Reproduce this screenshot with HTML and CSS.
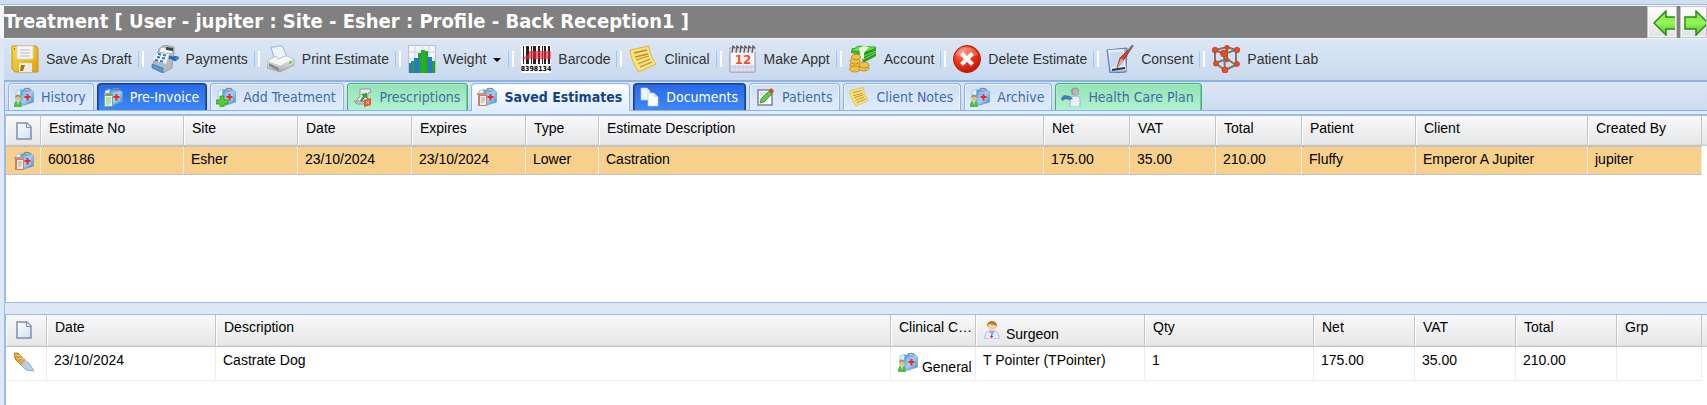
FILE: index.html
```html
<!DOCTYPE html>
<html lang="en">
<head>
  <meta charset="UTF-8">
  <meta name="viewport" content="width=device-width, initial-scale=1.0">
  <title>Treatment</title>
  <link rel="stylesheet" href="styles.css">
</head>
<body>
  <svg class="sprite" aria-hidden="true">
    <defs>
      <linearGradient id="gKit" x1="0" y1="0" x2="1" y2="1"><stop offset="0" stop-color="#4b93d8"/><stop offset=".5" stop-color="#9cccf6"/><stop offset="1" stop-color="#3a7fc6"/></linearGradient>
      <linearGradient id="gGold" x1="0" y1="0" x2="1" y2="1"><stop offset="0" stop-color="#ffdc3c"/><stop offset="1" stop-color="#dba20c"/></linearGradient>
      <linearGradient id="gGrey" x1="0" y1="0" x2="0" y2="1"><stop offset="0" stop-color="#fdfdfd"/><stop offset="1" stop-color="#a9a9a9"/></linearGradient>
      <linearGradient id="gPage" x1="0" y1="0" x2="1" y2="1"><stop offset="0" stop-color="#fff"/><stop offset="1" stop-color="#cfe0f0"/></linearGradient>
      <linearGradient id="gArrow" x1="0" y1="0" x2="0" y2="1"><stop offset="0" stop-color="#7ee23c"/><stop offset=".5" stop-color="#93f55a"/><stop offset="1" stop-color="#4cc81e"/></linearGradient>
      <radialGradient id="gRed" cx=".35" cy=".25" r=".8"><stop offset="0" stop-color="#ff8d70"/><stop offset=".5" stop-color="#f03519"/><stop offset="1" stop-color="#c01505"/></radialGradient>
    </defs>
    <symbol id="kit" viewBox="0 0 20 20">
      <path d="M2 4 7 2v15l-5-2z" fill="#e6f0f8" stroke="#8fb5d6" stroke-width=".7"/>
      <path d="M10 3c0-2 6-2 6 0" fill="none" stroke="#8b8b8b" stroke-width="1.5"/>
      <path d="M7 3 18 3.500 19.500 5v10L9 18.500 6 15z" fill="url(#gKit)" stroke="#5b9ad4" stroke-width=".6"/>
      <path d="M9 5 17 5v9l-8 2z" fill="#a3d0f8" opacity=".5"/>
      <path d="M12.500 7h2v2h2v2h-2v2.500h-2V11h-2V9h2z" fill="#f0281a"/>
    </symbol>
    <symbol id="kit-user" viewBox="0 0 20 20">
      <use href="#kit"/>
      <path d="M0 20c0-5 1-6 4-6s4 1 4 6z" fill="#4fbd4a"/><path d="m3 14 1 4 1-4z" fill="#d9f6d0"/>
      <circle cx="4" cy="11" r="2.800" fill="#e9b98a"/><path d="M1 10.500c0-4 6-4 6 0l-3-1z" fill="#7ba763"/>
    </symbol>
    <symbol id="kit-clip" viewBox="0 0 20 20">
      <use href="#kit"/>
      <path d="M1 7h9v13H1z" fill="#6fb074"/><path d="M2 9h7v10H2z" fill="#e4f3e0"/><path d="M3 6h5v3H3z" fill="#8c958c"/>
      <path d="M3 11h5M3 13h5M3 15h5M3 17h4" stroke="#8fc391"/>
    </symbol>
    <symbol id="kit-plus" viewBox="0 0 20 20">
      <use href="#kit"/>
      <path d="M4 9h4v4h4v4H8v3H4v-3H0v-4h4z" fill="#5bcb38" stroke="#2f9a1d" stroke-width=".8"/>
    </symbol>
    <symbol id="kit-bill" viewBox="0 0 20 20">
      <use href="#kit"/>
      <path d="M1 7h9v12H1z" fill="#c9806b"/><path d="M3 9h6v9H3z" fill="#f5ede8"/><path d="M0 6h10v2H0z" fill="#d88e78"/>
      <path d="M4 11h4M4 13h4M4 15h3" stroke="#c79a8c"/>
    </symbol>
    <symbol id="page" viewBox="0 0 16 18">
      <path d="M1 1h10l4 4v12H1z" fill="url(#gPage)" stroke="#7f8fb0" stroke-width="1.500"/>
      <path d="M10.500 1v4.500H15" fill="#dfe8f3" stroke="#7f8fb0"/>
    </symbol>
    <symbol id="note" viewBox="0 0 28 28">
      <path d="M1 5 20 1c1 8 3 13 7 18L10 27C5 21 2 13 1 5z" fill="#f9e27d" stroke="#dcb646"/>
      <path d="m5 8 13-3M6 12l13-3M7 15l13-4M9 19l12-5M11 22l12-5" stroke="#b78f2e" stroke-width="1.300"/>
    </symbol>
    <symbol id="disk" viewBox="0 0 28 28">
      <path d="M1 1h24l2 2v24H4l-3-3z" fill="url(#gGold)" stroke="#c79412"/>
      <path d="M6 1h16v13H6z" fill="#f6f6f6" stroke="#d5d5d5"/><path d="M9 5h10M9 8h10M9 11h10" stroke="#bbb"/>
      <path d="M8 18h13v9H8z" fill="#e9e9e9"/><path d="M10 20h4l-2 6h-3z" fill="#a1760c"/><path d="M3 3h1v2H3z" fill="#a1760c"/>
    </symbol>
    <symbol id="till" viewBox="0 0 28 28">
      <path d="m8 4 5-4 10 2v6l-2 15-9 5L1 22l3-8z" fill="#b4bac1" stroke="#8a9097" stroke-width=".7"/>
      <path d="m10 3 11 1v4L9 7z" fill="#fafafa"/><path d="m15 2 7 1v3l-7-1z" fill="#444"/>
      <path d="m6 8 12 1-3 10L2 15z" fill="#f4f6f8"/>
      <path d="m7 9 3 .5M12 10l3 .5M6 12l3 .5M11 13l3 .5M4 15l3 .5M9 16l3 .5" stroke="#2e7cc4" stroke-width="2"/>
      <path d="m1 19 11 4v5L1 23z" fill="#4f9bdd" stroke="#2d6fae" stroke-width=".6"/>
      <path d="m18 12 6 2M24 11v5" stroke="#2569b0" stroke-width="3"/><circle cx="26" cy="13" r="2" fill="#3a86cc"/>
    </symbol>
    <symbol id="printer" viewBox="0 0 28 28">
      <path d="M4 2c5 1 8-3 12 0l4 10-12 4z" fill="#eef5ff" stroke="#8fb0dd"/>
      <path d="m0 16 9-5 2 3 8-3 8 3v6l-14 7L0 23z" fill="url(#gGrey)" stroke="#999" stroke-width=".7"/>
      <path d="m0 16 13 5 14-7-8-3-8 3-2-3z" fill="#f5f5f5" stroke="#bbb" stroke-width=".5"/>
      <path d="m2 21 10 5v-3L2 18z" fill="#888"/><path d="m22 17 3-1v2l-3 1z" fill="#5fcb47"/>
    </symbol>
    <symbol id="chart" viewBox="0 0 28 28">
      <path d="M.5.5h27v27H.5z" fill="#f2f6fc" stroke="#b6bfcd"/><path d="M0 7h28M0 14h28M0 21h28M7 0v28M14 0v28M21 0v28" stroke="#c8d2e2"/>
      <path d="M3 16h4v12H3zM10 8h4v20h-4zM17 6h3v22h-3zM24 16h3v12h-3z" fill="#28a228"/>
      <path d="M1 18h3v10H1zM6 13h5v15H6zM13 9h3v19h-3zM20 12h4v16h-4z" fill="#2878cf"/>
      <path d="M13 5h4v23h-4z" fill="#27ae2a"/>
    </symbol>
    <symbol id="money" viewBox="0 0 28 28">
      <path d="m3 3 14 1v7L2 8z" fill="#3fb32e"/><path d="m2 6 7-5 18 1-4 6z" fill="#6adb4c" stroke="#2f9225" stroke-width=".7"/>
      <path d="m12 8 15-5v8l-13 7z" fill="#299b20"/><path d="m13 12 14-6M13 15l14-7" stroke="#74dc5c"/><path d="m10 3 5-2 5 1-5 6v6l-3-1z" fill="#e7f5dc"/>
      <g fill="#f0c14a" stroke="#b98310" stroke-width=".8"><ellipse cx="6" cy="20" rx="5" ry="3"/><ellipse cx="6" cy="16" rx="5" ry="3"/><ellipse cx="7" cy="12" rx="4.500" ry="2.600"/><ellipse cx="6" cy="24" rx="5.500" ry="3"/><ellipse cx="15" cy="23" rx="5" ry="3"/><ellipse cx="15" cy="20" rx="5" ry="3"/></g>
    </symbol>
    <symbol id="delete" viewBox="0 0 28 28">
      <circle cx="14" cy="14" r="13.500" fill="url(#gRed)" stroke="#b51c0a"/><path d="M3 10c3-10 19-10 22 0-8 3-14 4-22 0z" fill="#fff" opacity=".2"/>
      <path d="m8.500 8.500 11 11m0-11-11 11" stroke="#fff" stroke-width="4"/>
    </symbol>
    <symbol id="consent" viewBox="0 0 28 28">
      <path d="m1 5 20-2-1 24-16 1z" fill="#9db4d6" stroke="#5f7aa8"/><path d="m2 5 16-1 2 21-15 1z" fill="#e2ecfa"/><path d="m4 8 13-1 1 13-13 2z" fill="#c6d9f3"/>
      <path d="m6 25 13-2" stroke="#27334b" stroke-width="2"/>
      <path d="M27 1 19 13l-8 10 3-10L25 2z" fill="#d8402c" stroke="#8e2013" stroke-width=".8"/><path d="m15 13 3 3-7 7z" fill="#e5a08c"/><path d="M27 0 22 6" stroke="#777" stroke-width="2"/>
    </symbol>
    <symbol id="molecule" viewBox="0 0 28 28">
      <path d="M3 5v13l10 7 11-5V5l-9-3zM3 5l9 4 12-4M12 9l1 16M15 2v12L3 18m12-4 9 6" fill="none" stroke="#777" stroke-width="2"/>
      <g fill="#ee4b22" stroke="#b92c0b" stroke-width=".6"><circle cx="3" cy="5" r="2.800"/><circle cx="15" cy="2.500" r="2.200"/><circle cx="25" cy="5" r="2.800"/><circle cx="12" cy="8.500" r="3.500"/><circle cx="4" cy="18.500" r="2.600"/><circle cx="15" cy="15" r="2"/><circle cx="25" cy="19" r="2.500"/><circle cx="13" cy="25" r="3"/></g>
    </symbol>
    <symbol id="script" viewBox="0 0 20 20">
      <path d="M7 2h10l1 3-3 1-1 9H3l2-4 2-1z" fill="#e9e9ec" stroke="#85858c" stroke-width=".8"/><path d="M1 14h10l2 3H4z" fill="#c8c8ce" stroke="#77777d" stroke-width=".7"/>
      <path d="m8 7 6-1v6l-2-2-3 5-2-1 3-5z" fill="#29a32e"/><path d="m11 13 7-2v7l-7 2z" fill="#e8552f"/><path d="m13 14 3 3m0-3-3 3" stroke="#ffd0b8"/>
    </symbol>
    <symbol id="documents" viewBox="0 0 20 20">
      <path d="M2 1h6l3 3v9H2z" fill="#eef4fb" stroke="#b9c9de" stroke-width=".7"/><path d="M9 6h6l4 4v9H9z" fill="#fff" stroke="#b9c9de" stroke-width=".7"/><path d="M15 6v4h4M8 1v3h3" fill="#ccd9ea"/>
    </symbol>
    <symbol id="edit" viewBox="0 0 20 20">
      <path d="M3 3h14v15H3z" fill="#fff" stroke="#76849b" stroke-width="1.500"/><path d="M5 6h7M5 8h5" stroke="#b6bfcd"/>
      <path d="m14 4 3 3-8 8-4 1 1-4z" fill="#65cc41" stroke="#2c8c23" stroke-width=".8"/><path d="m14 4 2-3 3 3-2 3z" fill="#e0462c"/>
    </symbol>
    <symbol id="health" viewBox="0 0 20 20">
      <circle cx="14" cy="4.500" r="4" fill="#909ba8"/><path d="M12 4c0-3 5-3 5 1s-5 4-5-1z" fill="#c9b3a6"/><path d="M9 20V12c1-4 10-4 10 0v8z" fill="#e8eef8" stroke="#94a3ba" stroke-width=".8"/>
      <path d="m0 11 3-3 6 1 3 3-4 1-3-1-4 2z" fill="#3f7fb4"/>
    </symbol>
    <symbol id="scalpel" viewBox="0 0 20 20">
      <path d="m0 1 4 0 7 7-4 5-6-6z" fill="#d99a2f" stroke="#a97015" stroke-width=".7"/><path d="m1 3 6 1M3 7l6-1M6 11l4-5" stroke="#f3cd7b"/>
      <path d="m10 8 5 3 5 8-8-1-5-5z" fill="#b5d2f3" stroke="#7c9cc4" stroke-width=".8"/><path d="m8 11 3-1 1 3-2 1z" fill="#f3c164"/>
    </symbol>
    <symbol id="surgeon" viewBox="0 0 16 18">
      <path d="M1 18c0-7 2-8 7-8s7 1 7 8z" fill="#e6ecff" stroke="#9bace2" stroke-width=".8"/><path d="m5 10 3 5 3-5z" fill="#8daaf0"/>
      <circle cx="8" cy="5.500" r="4" fill="#f6cf9e"/><path d="M3 6c-1-8 11-8 10 0l-2-2-6-1z" fill="#b87a22"/><path d="M7 14h1v1h1v1H8v1H7v-1H6v-1h1z" fill="#ee3423"/>
    </symbol>
    <symbol id="arrow-left" viewBox="0 0 24 26">
      <path d="M1 13 13 1v6h12v12H13v6z" fill="url(#gArrow)" stroke="#2c8a18" stroke-width="1.500"/>
    </symbol>
    <symbol id="arrow-right" viewBox="0 0 24 26">
      <path d="M24 13 12 1v6H1v12h11v6z" fill="url(#gArrow)" stroke="#2c8a18" stroke-width="1.500"/>
    </symbol>
  </svg>

  <main class="window">
    <header class="titlebar">
      <h1>Treatment [ User - jupiter : Site - Esher : Profile - Back Reception1 ]</h1>
      <nav class="pager">
        <button type="button" aria-label="Previous"><svg><use href="#arrow-left"/></svg></button>
        <button type="button" aria-label="Next"><svg><use href="#arrow-right"/></svg></button>
      </nav>
    </header>

    <div class="toolbar">
      <button type="button"><svg><use href="#disk"/></svg>Save As Draft</button>
      <button type="button"><svg><use href="#till"/></svg>Payments</button>
      <button type="button"><svg><use href="#printer"/></svg>Print Estimate</button>
      <button type="button" class="has-menu"><svg><use href="#chart"/></svg>Weight</button>
      <button type="button">
        <svg class="wide" viewBox="0 0 30 28">
          <path d="M0 0h30v28H0z" fill="#fff"/>
          <path d="M2 1h1v18H2zM5 1h3v18H5zM10 1h1v18h-1zM12 1h3v18h-3zM17 1h2v18h-2zM21 1h1v18h-1zM23 1h2v18h-2zM27 1h2v18h-2z" fill="#2b2021"/>
          <path d="M8 6h22v8H0l8-5z" fill="#f0263a" opacity=".65"/>
          <text x="15" y="26" text-anchor="middle" class="barcode-digits">8398134</text>
        </svg>Barcode</button>
      <button type="button"><svg><use href="#note"/></svg>Clinical</button>
      <button type="button">
        <svg viewBox="0 0 28 28">
          <path d="M1 3h25v24H1z" fill="#f7f7fc" stroke="#8c8caa"/><path d="M2 20h23v6H2z" fill="#dedff0"/>
          <path d="M2 22h23M6 20v6M10 20v6M14 20v6M18 20v6M22 20v6" stroke="#bfc0db" stroke-width=".6"/>
          <path d="M1 4h26v3H1z" fill="#d8d8e0"/>
          <path d="m3 8 1-7 2 2M7 8l1-7 2 2M11 8l1-7 2 2M15 8l1-7 2 2M19 8l1-7 2 2M23 8l1-7 2 2" fill="none" stroke="#555" stroke-width="1.200"/>
          <text x="14" y="19" text-anchor="middle" class="calendar-day">12</text>
        </svg>Make Appt</button>
      <button type="button"><svg><use href="#money"/></svg>Account</button>
      <button type="button"><svg><use href="#delete"/></svg>Delete Estimate</button>
      <button type="button"><svg><use href="#consent"/></svg>Consent</button>
      <button type="button"><svg><use href="#molecule"/></svg>Patient Lab</button>
    </div>

    <div class="tabs">
      <button type="button"><svg><use href="#kit-user"/></svg>History</button>
      <button type="button" class="blue"><svg><use href="#kit-clip"/></svg>Pre-Invoice</button>
      <button type="button"><svg><use href="#kit-plus"/></svg>Add Treatment</button>
      <button type="button" class="green"><svg><use href="#script"/></svg>Prescriptions</button>
      <button type="button" class="active"><svg><use href="#kit-bill"/></svg>Saved Estimates</button>
      <button type="button" class="blue"><svg><use href="#documents"/></svg>Documents</button>
      <button type="button"><svg><use href="#edit"/></svg>Patients</button>
      <button type="button"><svg><use href="#note"/></svg>Client Notes</button>
      <button type="button"><svg><use href="#kit-user"/></svg>Archive</button>
      <button type="button" class="green"><svg><use href="#health"/></svg>Health Care Plan</button>
    </div>

    <section class="grid estimates">
      <table>
        <colgroup>
          <col class="w-icon"><col class="w-no"><col class="w-med"><col class="w-med"><col class="w-med"><col class="w-type"><col>
          <col class="w-sum"><col class="w-sum"><col class="w-sum"><col class="w-med"><col class="w-wide"><col class="w-med">
        </colgroup>
        <thead>
          <tr>
            <th><svg class="page"><use href="#page"/></svg></th>
            <th>Estimate No</th><th>Site</th><th>Date</th><th>Expires</th><th>Type</th><th>Estimate Description</th>
            <th>Net</th><th>VAT</th><th>Total</th><th>Patient</th><th>Client</th><th>Created By</th>
          </tr>
        </thead>
        <tbody>
          <tr class="selected">
            <td><svg><use href="#kit-bill"/></svg></td>
            <td>600186</td><td>Esher</td><td>23/10/2024</td><td>23/10/2024</td><td>Lower</td><td>Castration</td>
            <td>175.00</td><td>35.00</td><td>210.00</td><td>Fluffy</td><td>Emperor A Jupiter</td><td>jupiter</td>
          </tr>
        </tbody>
      </table>
    </section>

    <div class="splitter"></div>

    <section class="grid items">
      <table>
        <colgroup>
          <col class="w-icon"><col class="w-wide"><col><col class="w-sum"><col class="w-wide"><col class="w-wide">
          <col class="w-price"><col class="w-price"><col class="w-price"><col class="w-sum">
        </colgroup>
        <thead>
          <tr>
            <th><svg class="page"><use href="#page"/></svg></th>
            <th>Date</th><th>Description</th><th>Clinical C…</th>
            <th><svg class="page"><use href="#surgeon"/></svg> Surgeon</th>
            <th>Qty</th><th>Net</th><th>VAT</th><th>Total</th><th>Grp</th>
          </tr>
        </thead>
        <tbody>
          <tr>
            <td><svg><use href="#scalpel"/></svg></td>
            <td>23/10/2024</td><td>Castrate Dog</td>
            <td><svg><use href="#kit-user"/></svg> General</td>
            <td>T Pointer (TPointer)</td><td>1</td><td>175.00</td><td>35.00</td><td>210.00</td><td></td>
          </tr>
        </tbody>
      </table>
    </section>
  </main>
</body>
</html>
```
FILE: styles.css
```css
* {
  box-sizing: border-box;
}
body {
  margin: 0;
  background: #dfe8f6;
  font-family: "Liberation Sans", Arial, sans-serif;
  font-size: 14px;
  line-height: 16px;
  color: #000;
}
button {
  margin: 0;
  padding: 0;
  border: none;
  background: none;
  font: inherit;
  cursor: pointer;
}
.sprite {
  position: absolute;
  width: 0;
  height: 0;
}
.barcode-digits {
  font: bold 7px "DejaVu Sans Condensed", sans-serif;
}
.calendar-day {
  font: bold 12px "DejaVu Sans", sans-serif;
  fill: #f4511e;
}
.window {
  display: flex;
  flex-direction: column;
  min-height: 100vh;
  padding-left: 4px;
  overflow: hidden;
  border-top: 4px solid #d0deef;
}

/* title */
.titlebar {
  display: flex;
  justify-content: space-between;
  height: 34px;
  margin-left: -4px;
  padding-left: 4px;
  border-top: 1px solid #99bce8;
  background: linear-gradient(#808080, #808080) 4px 1px no-repeat, #f4f8fd;
}
.titlebar h1 {
  margin: 0;
  font: bold 20px/32px "DejaVu Sans Condensed", Tahoma, sans-serif;
  color: #fff;
}
.pager {
  display: flex;
  gap: 3px;
  padding-top: 1px;
}
.pager button {
  width: 30px;
  padding: 1px 0 0 4px;
  border: 2px solid #f8f8f8;
  background: linear-gradient(#fff, #e3e3e3);
  outline: 1px solid #c4c4c4;
  outline-offset: -1px;
  overflow: hidden;
}
.pager button:last-child {
  width: 27px;
  padding-left: 2px;
  border-right: none;
}
.pager svg {
  display: block;
  width: 24px;
  height: 26px;
}

/* toolbar */
.toolbar {
  display: flex;
  align-items: center;
  height: 44px;
  padding: 0 0 2px 7px;
  border-top: 1px solid #f4f8fd;
  border-bottom: 2px solid #8db2e3;
  background: linear-gradient(#dce7f5, #c9d9ee);
}
.toolbar button {
  display: flex;
  align-items: center;
  gap: 7px;
  color: #333;
}
.toolbar svg {
  width: 28px;
  height: 28px;
}
.toolbar .wide {
  width: 30px;
}
.toolbar button + button::before {
  content: "";
  width: 3px;
  height: 16px;
  margin-left: 6px;
  border-left: 1px solid #98c8ff;
  border-right: 2px solid #fff;
}
.has-menu::after {
  content: "";
  margin: 2px 1px 0 0;
  border: 4px solid transparent;
  border-top-color: #000;
  border-bottom: none;
}

/* tabs */
.tabs {
  display: flex;
  gap: 3px;
  height: 32px;
  padding: 1px 3px 0;
  border-left: 1px solid #8db2e3;
  background:
    linear-gradient(#8db2e3, #8db2e3) 0 28px / 100% 1px no-repeat,
    linear-gradient(#deecfd, #deecfd) 0 29px / 100% 3px no-repeat,
    linear-gradient(#dce6f5, #cbdaf0);
}
.tabs button {
  display: flex;
  align-items: center;
  gap: 7px;
  height: 27px;
  padding: 0 7px 0 5px;
  border: 1px solid #8db2e3;
  border-bottom: none;
  border-radius: 4px 4px 0 0;
  background: linear-gradient(#cfdff5, #deecfd);
  box-shadow: inset 1px 1px 0 #eef5fe, inset -1px 0 0 #eef5fe;
  font-family: "DejaVu Sans Condensed", Tahoma, sans-serif;
  color: #416da3;
}
.tabs svg {
  width: 20px;
  height: 20px;
}
.tabs .blue {
  border-color: #153f8f;
  background: linear-gradient(#2a6ae8, #3d86f8);
  box-shadow: inset 1px 1px 0 #1d55c4, inset -1px 0 0 #1d55c4;
  color: #fff;
}
.tabs .green {
  border-color: #3cb371;
  background: linear-gradient(#93e3b6, #b0f3d0);
  box-shadow: inset 1px 1px 0 #a9efc9, inset -1px 0 0 #6fce9a;
}
.tabs .active {
  height: 28px;
  padding-bottom: 1px;
  background: linear-gradient(#fff, #deecfd);
  font-weight: bold;
  color: #15428b;
}

/* grids */
.grid {
  padding-right: 5px;
  border-top: 2px solid #99bce8;
  border-left: 2px solid #99bce8;
}
.estimates {
  height: 188px;
  background: linear-gradient(#f9f9f9, #e6e7e9 28px, #d0d0d0 29px, #d0d0d0 30px) 0 0 / 100% 30px no-repeat, #fff;
}
.items {
  flex: 1;
  border-top-width: 1px;
  background: linear-gradient(#f9f9f9, #e6e7e9 30px, #d0d0d0 31px, #d0d0d0 32px) 0 0 / 100% 32px no-repeat, #fff;
}
.splitter {
  height: 12px;
  border-top: 1px solid #99bce8;
  border-left: 1px solid #99bce8;
}
table {
  width: 100%;
  table-layout: fixed;
  border-collapse: separate;
  border-spacing: 0;
}
th, td {
  padding: 4px 0 0 8px;
  overflow: hidden;
  white-space: nowrap;
  text-overflow: ellipsis;
  text-align: left;
  vertical-align: top;
  font-weight: normal;
}
th {
  height: 30px;
  border-right: 1px solid #c5c5c5;
  border-bottom: 1px solid #c5c5c5;
  box-shadow: inset 1px 0 0 #fff;
}
td {
  height: 29px;
  padding-left: 7px;
  border-right: 1px solid #ededed;
}
.items th {
  height: 32px;
}
.items td {
  height: 34px;
  padding-top: 5px;
  border-bottom: 1px solid #ededed;
}
th:first-child {
  padding-left: 10px;
}
td:first-child {
  padding-left: 8px;
}
.selected td {
  border-top: 1px dotted #99aee8;
  border-bottom: 1px dotted #99aee8;
  background: #f7d18b;
}
td svg {
  width: 20px;
  height: 20px;
}
th .page {
  width: 16px;
  height: 18px;
  margin: 2px 2px 0 0;
}
.w-icon { width: 35px; }
.w-no { width: 143px; }
.w-med { width: 114px; }
.w-type { width: 73px; }
.w-sum { width: 86px; }
.w-price { width: 101px; }
.w-wide { width: 172px; }
.items .w-icon { width: 41px; }
.items .w-sum { width: 85px; }
.items .w-wide { width: 169px; }
```
